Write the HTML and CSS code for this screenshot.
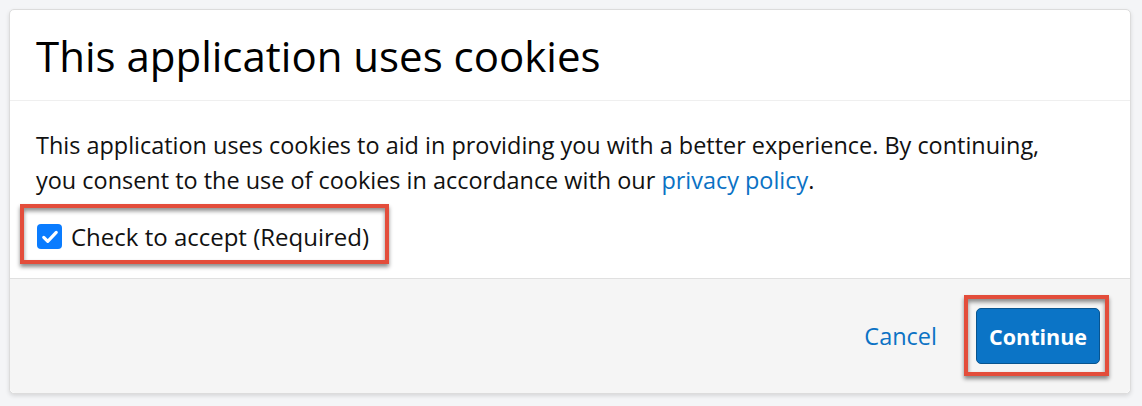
FILE: index.html
```html
<!DOCTYPE html>
<html lang="en">
<head>
<meta charset="utf-8">
<title>Cookies</title>
<link rel="stylesheet" href="styles.css">
</head>
<body>
<div class="modal">
  <div class="modal-header">
    <h1 class="modal-title">This application uses cookies</h1>
  </div>
  <div class="modal-body">
    <p class="modal-text">This application uses cookies to aid in providing you with a better experience. By continuing, you consent to the use of cookies in accordance with our <a class="link" href="#">privacy policy</a>.</p>
    <div class="accept-row">
      <label class="accept">
        <span class="checkbox">
          <svg viewBox="0 0 24 24" width="20" height="20"><path d="M4.5 12.5l4.8 4.8L19.5 6.5" fill="none" stroke="#fff" stroke-width="3.8" stroke-linecap="round" stroke-linejoin="round"/></svg>
        </span>
        <span class="accept-label">Check to accept (Required)</span>
      </label>
      <span class="highlight highlight-accept"></span>
    </div>
  </div>
  <div class="modal-footer">
    <a class="btn-cancel" href="#">Cancel</a>
    <div class="continue-wrap">
      <button class="btn-continue" type="button">Continue</button>
      <span class="highlight highlight-continue"></span>
    </div>
  </div>
</div>
</body>
</html>
```

FILE: styles.css
```css
html, body {
  margin: 0;
  padding: 0;
}
body {
  background: #f4f5f7;
  font-family: "Open Sans", "Noto Sans", sans-serif;
  color: #111;
  padding: 9px 11px 12px 9px;
  height: 406px;
  box-sizing: border-box;
}
.modal {
  background: #fff;
  border: 1px solid #dcdcdc;
  border-radius: 5px;
  box-shadow: 0 2px 4px rgba(0,0,0,0.12);
  display: flex;
  flex-direction: column;
  height: 100%;
  box-sizing: border-box;
}
.modal-header {
  height: 91px;
  border-bottom: 1px solid #efefef;
  display: flex;
  align-items: center;
  padding: 0 26px;
  box-sizing: border-box;
}
.modal-title {
  margin: 0;
  font-size: 42px;
  font-weight: 400;
  color: #000;
  line-height: 57px;
}
.modal-body {
  padding: 27px 26px 0;
  height: 177px;
  box-sizing: border-box;
}
.modal-text {
  margin: 0;
  max-width: 1020px;
  font-size: 23.45px;
  line-height: 35px;
  color: #111;
}
.link {
  color: #0b72c4;
  text-decoration: none;
}
.accept-row {
  position: relative;
  display: inline-block;
  margin-top: 22px;
}
.accept {
  display: flex;
  align-items: center;
  gap: 9px;
  font-size: 24px;
  line-height: 33px;
  color: #111;
}
.checkbox {
  width: 25px;
  height: 25px;
  border-radius: 4px;
  background: #0a7cff;
  display: flex;
  align-items: center;
  justify-content: center;
  margin-left: 1px;
}
.highlight {
  position: absolute;
  border: 4px solid #e34d3b;
  box-shadow: 0 3px 4px rgba(0,0,0,0.45), inset 0 3px 4px rgba(0,0,0,0.45);
  pointer-events: none;
}
.highlight-accept {
  left: -16px;
  top: -16px;
  right: -20px;
  bottom: -11px;
}
.modal-footer {
  flex: 1;
  background: #f5f5f5;
  border-top: 1px solid #e0e0e0;
  border-radius: 0 0 5px 5px;
  display: flex;
  align-items: center;
  justify-content: flex-end;
  padding: 0 30px 0 0;
  gap: 39px;
}
.btn-cancel {
  color: #0b72c4;
  text-decoration: none;
  font-size: 23.5px;
}
.continue-wrap {
  position: relative;
}
.btn-continue {
  display: block;
  width: 124px;
  height: 56px;
  background: #0b74c6;
  border: 1px solid #08548f;
  border-radius: 5px;
  color: #fff;
  font-family: "Open Sans", "Noto Sans", sans-serif;
  font-weight: 700;
  font-size: 21.5px;
  padding: 0;
  cursor: pointer;
}
.highlight-continue {
  left: -12px;
  top: -13px;
  right: -9px;
  bottom: -12px;
}
```
